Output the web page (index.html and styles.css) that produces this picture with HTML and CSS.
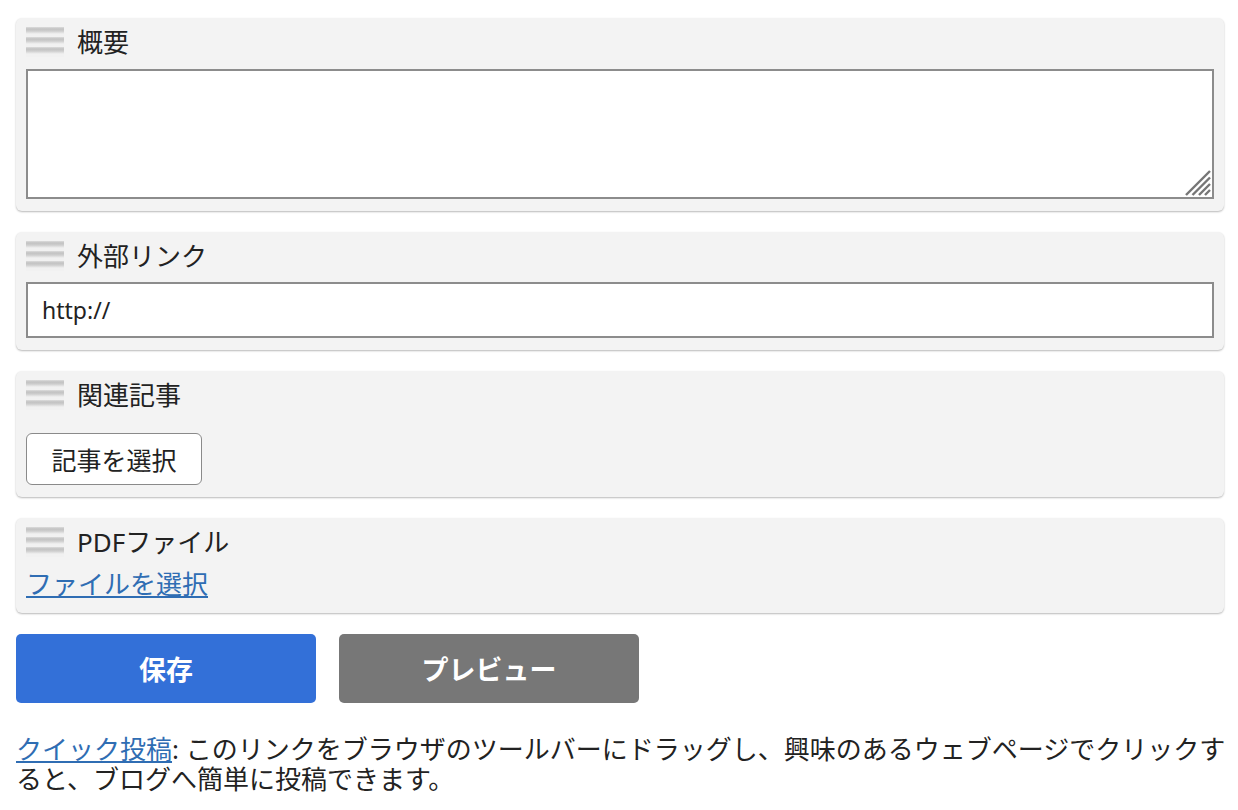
FILE: index.html
```html
<!DOCTYPE html>
<html lang="ja">
<head>
<meta charset="utf-8">
<title>投稿</title>
<link rel="stylesheet" href="styles.css">
</head>
<body>
<div class="page">
  <section class="panel">
    <div class="panel-head"><span class="handle"></span><span class="panel-title">概要</span></div>
    <div class="area-wrap">
      <textarea class="textarea"></textarea>
      <svg class="grip" width="26" height="26" viewBox="0 0 26 26">
        <g stroke="#767676" stroke-width="2.4" stroke-linecap="butt">
          <line x1="1" y1="25" x2="25" y2="1"/>
          <line x1="7.5" y1="25" x2="25" y2="7.5"/>
          <line x1="14" y1="25" x2="25" y2="14"/>
          <line x1="20" y1="25" x2="25" y2="20"/>
        </g>
      </svg>
    </div>
  </section>

  <section class="panel">
    <div class="panel-head"><span class="handle"></span><span class="panel-title">外部リンク</span></div>
    <input class="text-input" type="text" value="http://">
  </section>

  <section class="panel">
    <div class="panel-head"><span class="handle"></span><span class="panel-title">関連記事</span></div>
    <button class="btn-select" type="button">記事を選択</button>
  </section>

  <section class="panel panel-file">
    <div class="panel-head"><span class="handle"></span><span class="panel-title">PDFファイル</span></div>
    <div class="file-row"><a class="link" href="#">ファイルを選択</a></div>
  </section>

  <div class="actions">
    <button class="btn btn-save" type="button">保存</button>
    <button class="btn btn-preview" type="button">プレビュー</button>
  </div>

  <p class="note"><a class="link" href="#">クイック投稿</a>: このリンクをブラウザのツールバーにドラッグし、興味のあるウェブページでクリックすると、ブログへ簡単に投稿できます。</p>
</div>
</body>
</html>
```

FILE: styles.css
```css
* { box-sizing: border-box; }

html, body {
  margin: 0;
  background: #ffffff;
}

body {
  font-family: "Noto Sans", "Noto Sans CJK JP", sans-serif;
  font-size: 26px;
  color: #222222;
}

.page {
  padding: 18px 14px 0 16px;
}

.panel {
  background: #f3f3f3;
  border-radius: 6px;
  box-shadow: 0 1px 2px rgba(0, 0, 0, 0.28);
  padding: 9px 10px 12px;
  margin-bottom: 21px;
}

.panel-head {
  display: flex;
  align-items: center;
  gap: 13px;
  height: 30px;
}

.handle {
  flex: none;
  width: 38px;
  height: 30px;
  background: repeating-linear-gradient(
    to bottom,
    #dcdcdc 0px,
    #c2c2c2 2px,
    #cdcdcd 4px,
    #e6e6e6 6px,
    #f1f1f1 7px,
    #f1f1f1 10px
  );
}

.panel-title {
  font-size: 26px;
  line-height: 30px;
  color: #222;
}

.area-wrap {
  position: relative;
  margin-top: 12px;
}

.textarea {
  display: block;
  width: 100%;
  height: 130px;
  border: 2px solid #8c8c8c;
  background: #fff;
  resize: none;
  margin: 0;
  font: inherit;
  outline: none;
}

.grip {
  position: absolute;
  right: 3px;
  bottom: 3px;
}

.text-input {
  display: block;
  width: 100%;
  height: 56px;
  margin-top: 11px;
  border: 2px solid #8c8c8c;
  background: #fff;
  padding: 0 14px;
  font-family: "Noto Sans", "Noto Sans CJK JP", sans-serif;
  font-size: 23px;
  color: #222;
  outline: none;
}

.btn-select {
  display: block;
  margin-top: 23px;
  width: 176px;
  height: 52px;
  border: 1px solid #8a8a8a;
  border-radius: 6px;
  background: #fff;
  font-family: "Noto Sans", "Noto Sans CJK JP", sans-serif;
  font-size: 25px;
  color: #222;
  padding: 0;
}

.panel-file {
  padding-bottom: 14px;
}

.file-row {
  margin-top: 12px;
  line-height: 30px;
}

.link {
  color: #2f6db3;
  text-decoration: underline;
  text-underline-offset: 2px;
  text-decoration-thickness: 2px;
}

.actions {
  display: flex;
  gap: 23px;
  margin-top: 20px;
}

.btn {
  width: 300px;
  height: 69px;
  border: none;
  border-radius: 5px;
  color: #fff;
  font-family: "Noto Sans CJK JP", sans-serif;
  font-weight: 700;
  font-size: 27px;
  padding: 0;
}

.btn-save {
  background: #3370d8;
}

.btn-preview {
  background: #777777;
}

.note {
  margin: 31px -14px 0 0;
  line-height: 30px;
  font-size: 26px;
  color: #222;
}
```
